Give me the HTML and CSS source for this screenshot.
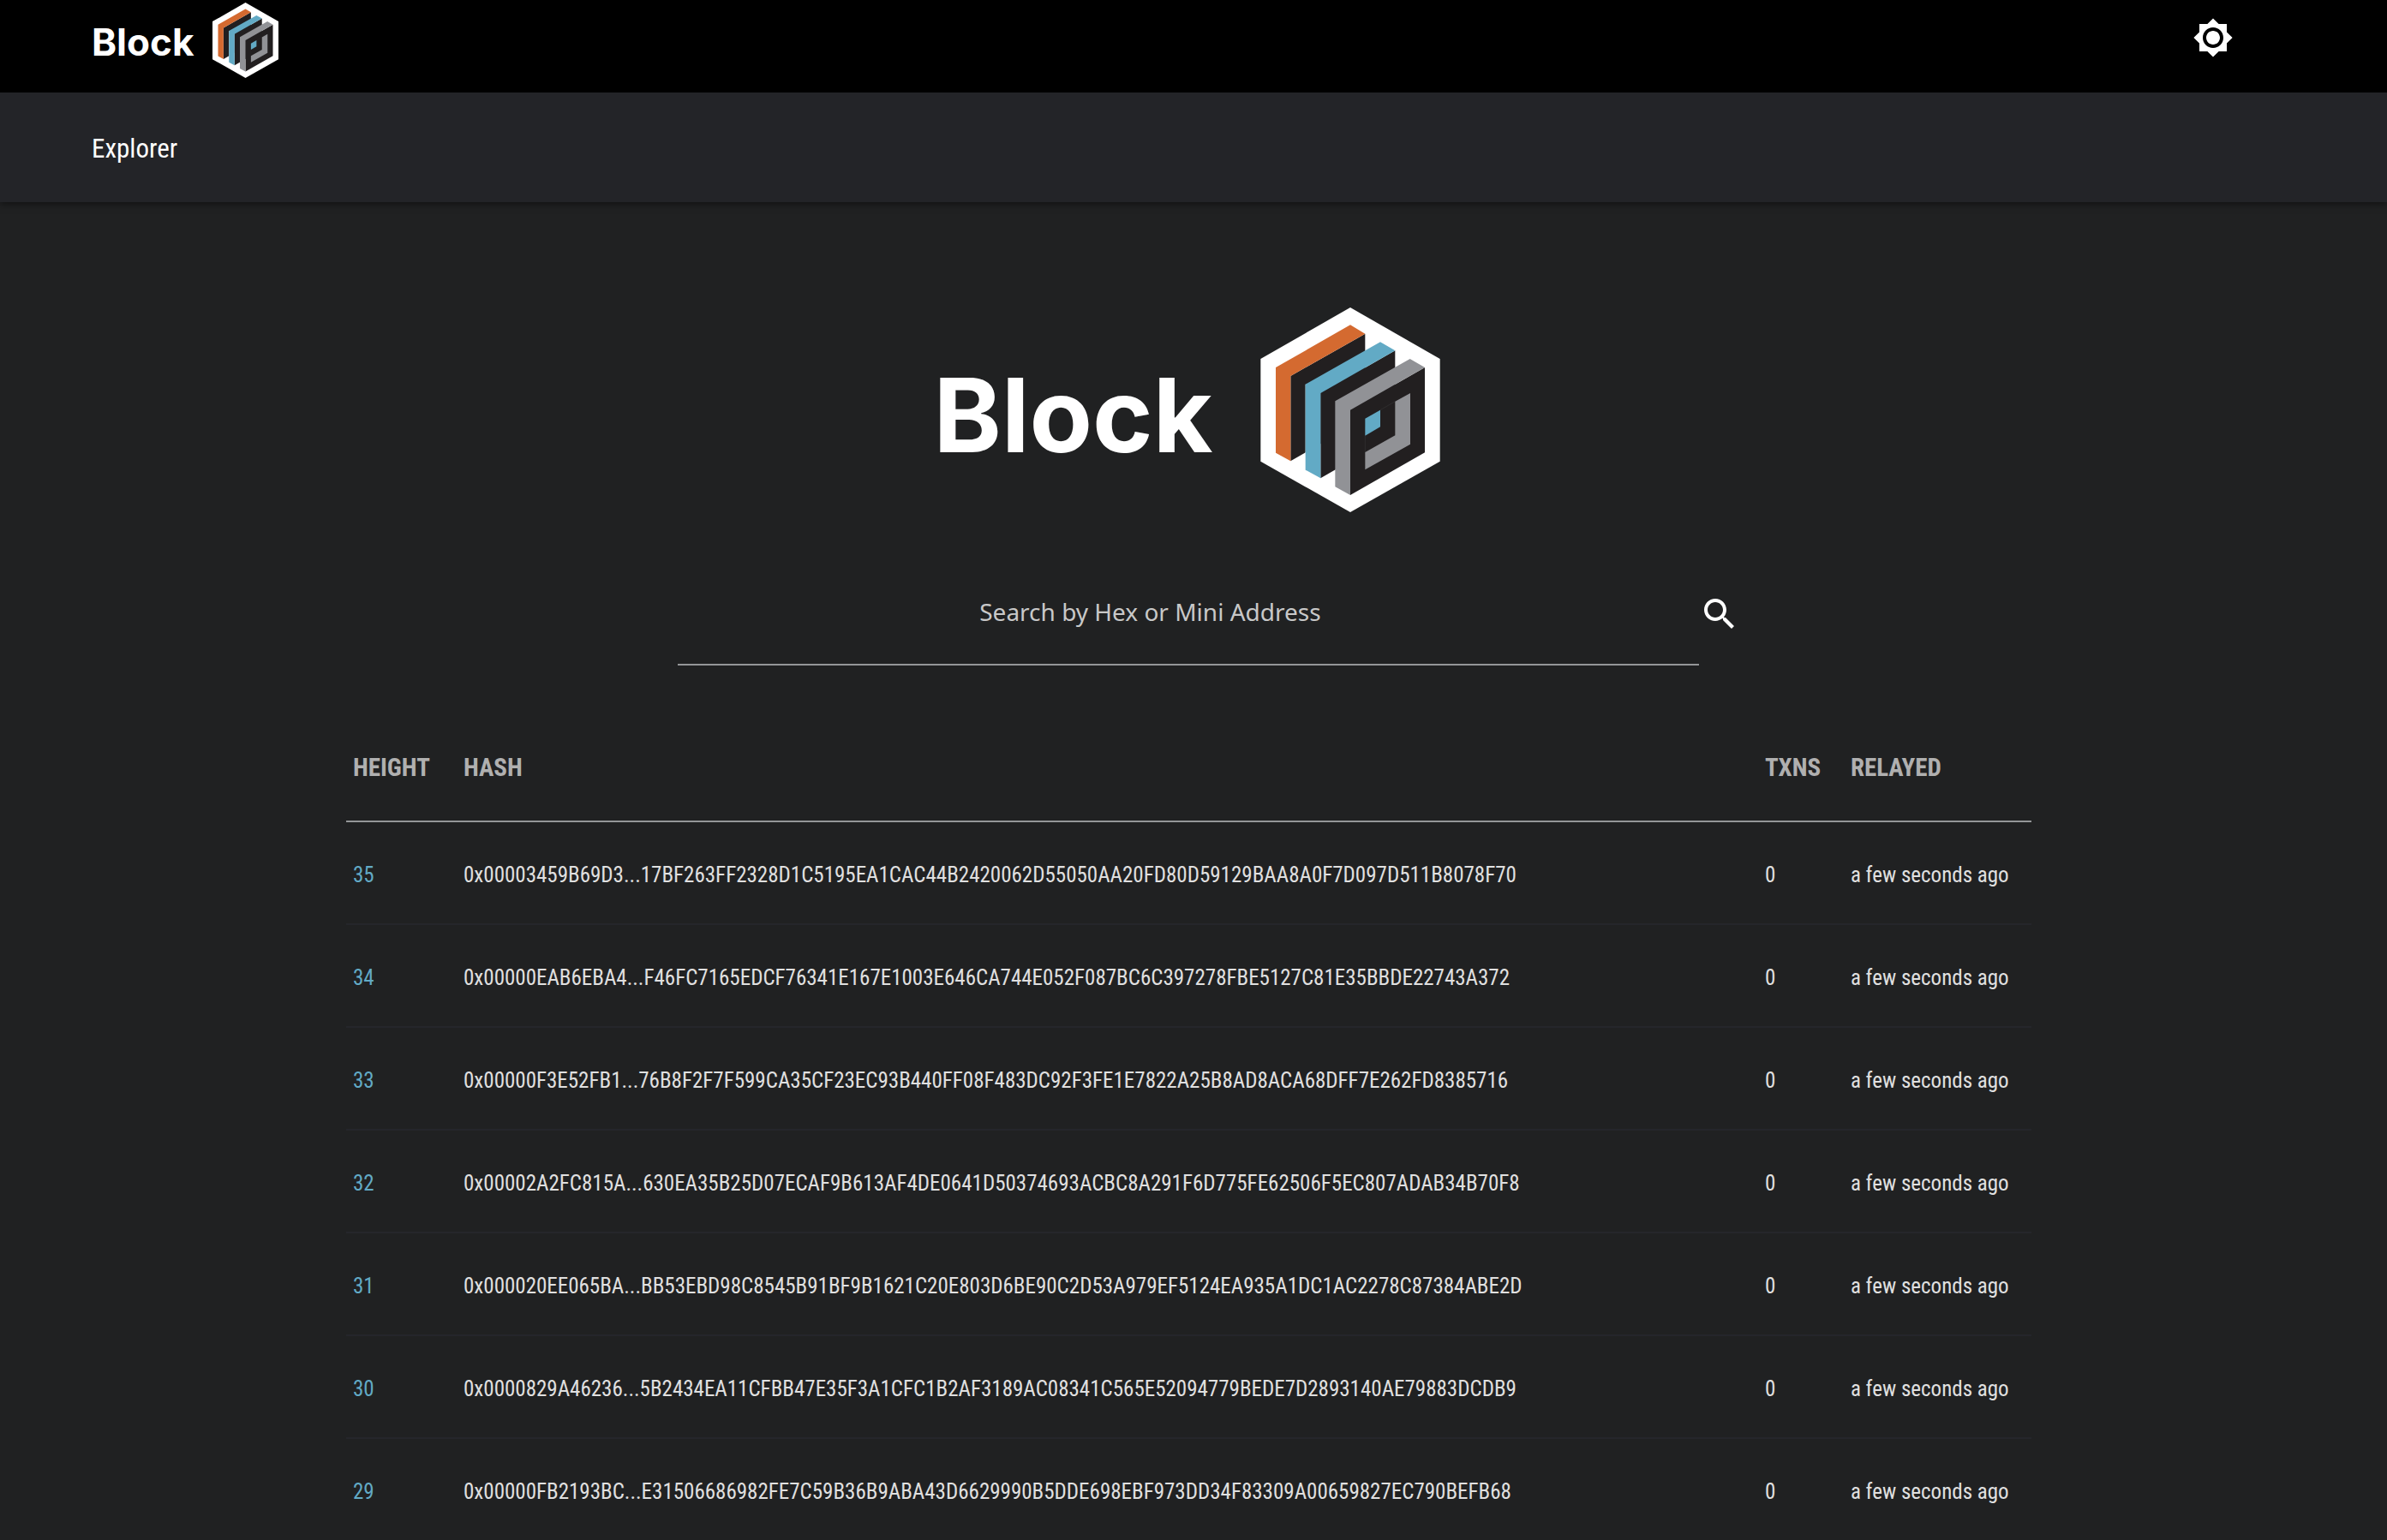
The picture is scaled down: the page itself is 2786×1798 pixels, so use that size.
FILE: index.html
```html
<!DOCTYPE html>
<html lang="en">
<head>
<meta charset="utf-8">
<title>Block Explorer</title>
<link rel="stylesheet" href="styles.css">
</head>
<body>
<svg class="sprite" aria-hidden="true">
  <symbol id="cube" viewBox="93 57 628 717">
    <path fill="#fff" d="M407 57 721 237V596L407 774 93 596V237z"/>
    <path fill="#221f20" d="M198 297 459 149V445L198 595z"/>
    <path fill="#d46a30" d="M146 267 407 118 459 149 198 297V595L146 566z"/>
    <path fill="#fff" d="M250 326H303V655L250 626z"/>
    <path fill="#221f20" d="M303 357 564 208V505L303 655z"/>
    <path fill="#62aac5" d="M250 326 512 178 564 208 303 357V655L250 626z"/>
    <path fill="#221f20" d="M407 416 668 267V565L407 714z"/>
    <path fill="#919296" d="M354 385 616 237 668 267 407 416V714L354 685z"/>
    <path fill="#919296" d="M564 386 617 357V536L459 625V564L564 505z"/>
    <path fill="#62aac5" d="M459 446 512 416V475L459 506z"/>
    <path stroke="#4a484a" stroke-width="1" d="M512 416 564 386M459 506V564"/>
  </symbol>
</svg>
<header class="topbar">
  <a class="brand" href="#"><span>Block</span><svg class="brand-mark" aria-hidden="true"><use href="#cube"/></svg></a>
  <button class="icon-button" type="button" aria-label="Toggle theme">
    <svg class="icon" viewBox="0 0 24 24" aria-hidden="true"><path d="M20 8.69V4h-4.69L12 .69 8.69 4H4v4.69L.69 12 4 15.31V20h4.69L12 23.31 15.31 20H20v-4.69L23.31 12 20 8.69zM12 18c-3.31 0-6-2.69-6-6s2.69-6 6-6 6 2.69 6 6-2.69 6-6 6zm0-10c-2.21 0-4 1.79-4 4s1.79 4 4 4 4-1.79 4-4-1.79-4-4-4z"/></svg>
  </button>
</header>
<nav class="nav"><a href="#">Explorer</a></nav>
<main class="content">
  <div class="hero"><span>Block</span><svg class="hero-mark" aria-hidden="true"><use href="#cube"/></svg></div>
  <form class="search">
    <input class="search-input" type="text" placeholder="Search by Hex or Mini Address" aria-label="Search by Hex or Mini Address">
    <button class="icon-button" type="button" aria-label="Search">
      <svg class="icon" viewBox="0 0 24 24" aria-hidden="true"><path d="M15.5 14h-.79l-.28-.27C15.41 12.59 16 11.11 16 9.5 16 5.91 13.09 3 9.5 3S3 5.91 3 9.5 5.91 16 9.5 16c1.61 0 3.09-.59 4.23-1.57l.27.28v.79l5 4.99L20.49 19l-4.99-5zm-6 0C7.01 14 5 11.99 5 9.5S7.01 5 9.5 5 14 7.01 14 9.5 11.99 14 9.5 14z"/></svg>
    </button>
  </form>
  <table class="blocks">
    <thead><tr><th class="col-height">HEIGHT</th><th>HASH</th><th class="col-txns">TXNS</th><th class="col-relayed">RELAYED</th></tr></thead>
    <tbody>
      <tr><td><a href="#">35</a></td><td>0x00003459B69D3...17BF263FF2328D1C5195EA1CAC44B2420062D55050AA20FD80D59129BAA8A0F7D097D511B8078F70</td><td>0</td><td>a few seconds ago</td></tr>
      <tr><td><a href="#">34</a></td><td>0x00000EAB6EBA4...F46FC7165EDCF76341E167E1003E646CA744E052F087BC6C397278FBE5127C81E35BBDE22743A372</td><td>0</td><td>a few seconds ago</td></tr>
      <tr><td><a href="#">33</a></td><td>0x00000F3E52FB1...76B8F2F7F599CA35CF23EC93B440FF08F483DC92F3FE1E7822A25B8AD8ACA68DFF7E262FD8385716</td><td>0</td><td>a few seconds ago</td></tr>
      <tr><td><a href="#">32</a></td><td>0x00002A2FC815A...630EA35B25D07ECAF9B613AF4DE0641D50374693ACBC8A291F6D775FE62506F5EC807ADAB34B70F8</td><td>0</td><td>a few seconds ago</td></tr>
      <tr><td><a href="#">31</a></td><td>0x000020EE065BA...BB53EBD98C8545B91BF9B1621C20E803D6BE90C2D53A979EF5124EA935A1DC1AC2278C87384ABE2D</td><td>0</td><td>a few seconds ago</td></tr>
      <tr><td><a href="#">30</a></td><td>0x0000829A46236...5B2434EA11CFBB47E35F3A1CFC1B2AF3189AC08341C565E52094779BEDE7D2893140AE79883DCDB9</td><td>0</td><td>a few seconds ago</td></tr>
      <tr><td><a href="#">29</a></td><td>0x00000FB2193BC...E31506686982FE7C59B36B9ABA43D6629990B5DDE698EBF973DD34F83309A00659827EC790BEFB68</td><td>0</td><td>a few seconds ago</td></tr>
    </tbody>
  </table>
</main>
</body>
</html>
```
FILE: styles.css
```css
* { box-sizing: border-box; }
body {
  margin: 0;
  background: #202122;
  color: #e0e0e0;
  font-family: "Roboto Condensed", Roboto, sans-serif;
  font-size: 25px;
}
a { color: inherit; text-decoration: none; }
.sprite { display: none; }
.topbar {
  display: flex;
  justify-content: space-between;
  align-items: flex-start;
  height: 108px;
  padding: 0 179px 0 107px;
  background: #000;
}
.brand, .hero {
  display: flex;
  color: #fff;
  font-family: Inter, sans-serif;
  font-weight: 700;
}
.brand { gap: 22px; padding-top: 3px; font-size: 44px; line-height: 92px; }
.brand-mark { width: 77px; height: 88px; }
.icon-button {
  padding: 0;
  border: 0;
  background: none;
  color: #fff;
}
.icon { display: block; width: 48px; height: 48px; fill: currentColor; }
.topbar .icon-button { margin-top: 20px; }
.nav {
  position: relative;
  display: flex;
  align-items: center;
  height: 128px;
  padding: 2px 107px 0;
  background: #232428;
  box-shadow: 0 2px 8px rgba(0, 0, 0, .5);
  color: #fff;
  font-size: 31px;
}
.content { padding: 123px 14.9% 0 14.5%; }
.hero {
  justify-content: center;
  gap: 56px;
  padding-right: 4px;
  font-size: 120px;
  line-height: 252px;
}
.hero-mark { width: 210px; height: 239px; }
.search {
  display: flex;
  align-items: flex-start;
  justify-content: center;
  margin: 40px 0 0 48px;
}
.search-input {
  width: 1192px;
  height: 126px;
  padding: 2px 90px 0 0;
  border: 0;
  border-bottom: 2px solid #949698;
  background: none;
  color: #fff;
  font: 28px "Noto Sans", sans-serif;
  text-align: center;
}
.search-input::placeholder { color: #c8c8c8; opacity: 1; }
.search .icon-button { margin-top: 42px; }
.blocks {
  width: 100%;
  margin-top: 60px;
  border-collapse: collapse;
  text-align: left;
}
.blocks th, .blocks td { height: 120px; padding: 4px 8px 0; white-space: nowrap; }
.blocks th {
  height: 122px;
  padding: 0 8px 4px;
  border-bottom: 2px solid #949698;
  color: #b0b0b0;
  font-size: 29px;
}
.blocks td { border-bottom: 2px solid #25262b; }
.blocks td a { color: #62aac5; }
.col-height { width: 129px; }
.col-txns { width: 100px; }
.col-relayed { width: 219px; }
```
